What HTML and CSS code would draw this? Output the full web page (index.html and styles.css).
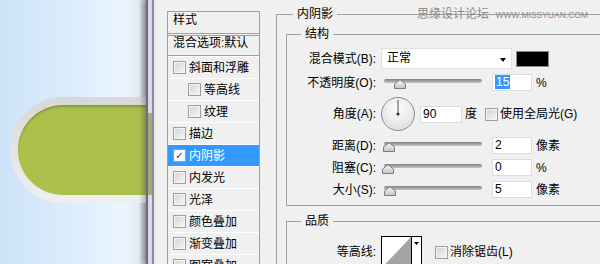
FILE: index.html
```html
<!DOCTYPE html>
<html lang="zh-CN">
<head>
  <meta charset="UTF-8" />
  <title>图层样式 - 内阴影</title>
  <link rel="stylesheet" href="styles.css">
</head>
<body>
  <div class="scene">
    <div class="pill"><div class="pill-fill"></div></div>
  </div>
  <div class="frame"></div>

  <div class="dialog">
    <ul class="style-list">
      <li class="list-head">样式</li>
      <li class="list-blend">混合选项:默认</li>
      <li class="item"><span class="check"></span>斜面和浮雕</li>
      <li class="item sub"><span class="check"></span>等高线</li>
      <li class="item sub"><span class="check"></span>纹理</li>
      <li class="item"><span class="check"></span>描边</li>
      <li class="item selected"><span class="check on">✓</span>内阴影</li>
      <li class="item"><span class="check"></span>内发光</li>
      <li class="item"><span class="check"></span>光泽</li>
      <li class="item"><span class="check"></span>颜色叠加</li>
      <li class="item"><span class="check"></span>渐变叠加</li>
      <li class="item"><span class="check"></span>图案叠加</li>
      <li class="item"><span class="check"></span>外发光</li>
    </ul>

    <div class="settings">
      <fieldset class="group">
        <legend>内阴影</legend>

        <fieldset class="subgroup">
          <legend>结构</legend>
          <div class="form structure">
            <div class="label">混合模式(B):</div>
            <div class="control">
              <div class="select">正常<span class="arrow"></span></div>
              <div class="swatch"></div>
            </div>

            <div class="label">不透明度(O):</div>
            <div class="control">
              <div class="slider"><div class="track"></div><svg class="thumb" style="left: 10px" width="12" height="10" viewBox="0 0 12 10"><defs><linearGradient id="tg" x1="0" y1="0" x2="0" y2="1"><stop offset="0" stop-color="#fafafa"/><stop offset="1" stop-color="#c4c4c4"/></linearGradient></defs><path d="M0.5 9.5V5L6 0.8L11.5 5V9.5Z" fill="url(#tg)" stroke="#7c7c7c"/></svg></div>
              <div class="field"><span class="picked">15</span></div>
              <span class="unit">%</span>
            </div>

            <div class="label">角度(A):</div>
            <div class="control">
              <svg class="dial" width="34" height="34" viewBox="0 0 34 34"><defs><radialGradient id="dg" cx="0.5" cy="0.35" r="0.65"><stop offset="0" stop-color="#ffffff"/><stop offset="1" stop-color="#dedede"/></radialGradient></defs><circle cx="17" cy="17" r="16.5" fill="url(#dg)" stroke="#8d8d8d"/><line x1="17" y1="3" x2="17" y2="17" stroke="#555"/><circle cx="17" cy="17" r="1.6" fill="#333"/></svg>
              <div class="field wide">90</div>
              <span class="unit deg">度</span>
              <span class="check global"></span>
              <span class="check-label">使用全局光(G)</span>
            </div>

            <div class="label">距离(D):</div>
            <div class="control">
              <div class="slider"><div class="track"></div><svg class="thumb" style="left: -1px" width="12" height="10" viewBox="0 0 12 10"><path d="M0.5 9.5V5L6 0.8L11.5 5V9.5Z" fill="url(#tg)" stroke="#7c7c7c"/></svg></div>
              <div class="field">2</div>
              <span class="unit">像素</span>
            </div>

            <div class="label">阻塞(C):</div>
            <div class="control">
              <div class="slider"><div class="track"></div><svg class="thumb" style="left: -2px" width="12" height="10" viewBox="0 0 12 10"><path d="M0.5 9.5V5L6 0.8L11.5 5V9.5Z" fill="url(#tg)" stroke="#7c7c7c"/></svg></div>
              <div class="field">0</div>
              <span class="unit">%</span>
            </div>

            <div class="label">大小(S):</div>
            <div class="control">
              <div class="slider"><div class="track"></div><svg class="thumb" style="left: 0px" width="12" height="10" viewBox="0 0 12 10"><path d="M0.5 9.5V5L6 0.8L11.5 5V9.5Z" fill="url(#tg)" stroke="#7c7c7c"/></svg></div>
              <div class="field">5</div>
              <span class="unit">像素</span>
            </div>
          </div>
        </fieldset>

        <fieldset class="subgroup quality">
          <legend>品质</legend>
          <div class="form">
            <div class="label">等高线:</div>
            <div class="control">
              <svg class="contour" width="41" height="32" viewBox="0 0 41 32"><rect x="0.5" y="0.5" width="40" height="31" fill="#fff" stroke="#000"/><polygon points="1,31.5 30,1 30,31.5" fill="#a3a3a3"/><line x1="30.5" y1="0" x2="30.5" y2="32" stroke="#000"/><polygon points="33,6 38,6 35.5,9" fill="#000"/></svg>
              <span class="check smooth"></span>
              <span class="check-label">消除锯齿(L)</span>
            </div>
          </div>
        </fieldset>
      </fieldset>
    </div>
  </div>

  <div class="watermark">思缘设计论坛 <span>www.missyuan.com</span></div>
</body>
</html>
```

FILE: styles.css
```css
body {
  margin: 0;
  width: 600px;
  height: 264px;
  overflow: hidden;
  position: relative;
  display: flex;
  font: 12px/16px "Liberation Sans", "Noto Sans CJK SC", sans-serif;
  color: #000;
  background: #f0f0f0;
}

/* canvas behind the dialog */
.scene {
  width: 146px;
  flex-shrink: 0;
  box-sizing: border-box;
  overflow: hidden;
  padding: 97px 0 0 10px;
  background: linear-gradient(90deg, #cde3f8, #dbecfc 45%, #eaf5ff 85%, #e2eaf2 95%, #b4bcc5);
}
.pill {
  width: 160px;
  height: 106px;
  box-sizing: border-box;
  padding: 8px 0 8px 8px;
  border-radius: 53px 0 0 53px;
  background: linear-gradient(#d8d8d8, #e4e4e4 50%, #efefef);
}
.pill-fill {
  height: 90px;
  border-radius: 45px 0 0 45px;
  background: #abc14b;
  box-shadow: inset 0 2px 2px rgba(70, 80, 20, 0.35);
}
.frame {
  width: 8px;
  flex-shrink: 0;
  box-sizing: border-box;
  border-left: 2px solid #6e6c7a;
  border-right: 2px solid #8e8aa0;
  background: linear-gradient(#ddd8e9 113px, #a5a775 113px, #a5a775 195px, #ddd8e9 195px);
  box-shadow: -3px 0 5px rgba(40, 40, 60, 0.35);
}

.dialog {
  flex: 1;
  min-width: 0;
  overflow: hidden;
  display: flex;
  align-items: flex-start;
  gap: 16px;
  padding: 6px 0 0 13px;
}

/* left style list */
.style-list {
  list-style: none;
  margin: 5px 0 0;
  padding: 0;
  width: 93px;
  flex-shrink: 0;
  box-sizing: border-box;
  border: 1px solid #a0a0a0;
}
.list-head {
  height: 21px;
  line-height: 17px;
  padding-left: 5px;
  border-bottom: 3px double #a0a0a0;
}
.list-blend {
  height: 19px;
  line-height: 15px;
  padding-left: 5px;
  border-bottom: 1px solid #a0a0a0;
}
.item {
  height: 21px;
  border-top: 1px solid #fff;
  display: flex;
  align-items: center;
  gap: 3px;
  padding-left: 5px;
}
.item.sub {
  padding-left: 20px;
}
.item.selected {
  background: #3399ff;
  color: #fff;
}

.check {
  width: 13px;
  height: 13px;
  flex-shrink: 0;
  box-sizing: border-box;
  border: 1px solid #9e9e9e;
  background: linear-gradient(135deg, #d2d2d2, #f8f8f8);
  box-shadow: inset 0 0 0 1px #f4f4f4;
}
.check.on {
  background: #fff;
  color: #2a2a40;
  font: 10px/11px "DejaVu Sans", sans-serif;
  text-align: center;
}

/* right settings */
.settings {
  width: 340px;
  flex-shrink: 0;
}
fieldset {
  margin: 0;
  min-width: 0;
  border: 1px solid #a0a0a0;
}
legend {
  padding: 0 4px;
  line-height: 16px;
}
.group {
  padding: 0 0 0 9px;
}
.group > legend {
  margin-left: 7px;
}
.subgroup {
  margin-top: 4px;
  padding: 0;
}
.subgroup > legend {
  margin-left: 14px;
}
.quality {
  margin-top: 7px;
}

.form {
  display: grid;
  grid-template-columns: 89px auto;
  column-gap: 5px;
  align-items: center;
  padding: 7px 0 8px;
}
.structure {
  grid-template-rows: 21px 17px 36px 17px 17px 17px;
  row-gap: 5px;
  padding: 6px 0 7px;
}
.label {
  text-align: right;
}
.control {
  display: flex;
  align-items: center;
}

.select {
  position: relative;
  width: 131px;
  height: 21px;
  box-sizing: border-box;
  padding-left: 5px;
  line-height: 19px;
  background: #fff;
  border: 1px solid #e0e0e0;
}
.select .arrow {
  position: absolute;
  right: 5px;
  top: 9px;
  border-top: 4px solid #000;
  border-left: 3px solid transparent;
  border-right: 3px solid transparent;
}
.swatch {
  width: 33px;
  height: 16px;
  margin-left: 4px;
  box-sizing: border-box;
  background: #000;
  border: 1px solid #8c8c8c;
}

.slider {
  position: relative;
  width: 98px;
  height: 17px;
  margin-left: 3px;
}
.slider .track {
  margin-top: 5px;
  height: 4px;
  border-radius: 2px;
  background: linear-gradient(#808080, #c6c6c6);
}
.slider .thumb {
  position: absolute;
  top: 5px;
}

.field {
  width: 40px;
  height: 17px;
  margin-left: 10px;
  box-sizing: border-box;
  padding-left: 2px;
  line-height: 15px;
  background: #fff;
  border: 1px solid #dcdcdc;
}
.field.wide {
  width: 42px;
  margin-left: 5px;
}
.picked {
  background: #3399ff;
  color: #fff;
  padding: 0 1px;
}
.unit {
  margin-left: 4px;
}
.unit.deg {
  margin-left: 3px;
}
.check.global {
  margin-left: 8px;
}
.check.smooth {
  margin-left: 13px;
}
.check-label {
  margin-left: 2px;
}

.watermark {
  position: absolute;
  top: 6px;
  right: 12px;
  color: #8a8a8a;
  white-space: nowrap;
}
.watermark span {
  font-size: 8.5px;
  text-transform: uppercase;
  margin-left: 3px;
}
```
